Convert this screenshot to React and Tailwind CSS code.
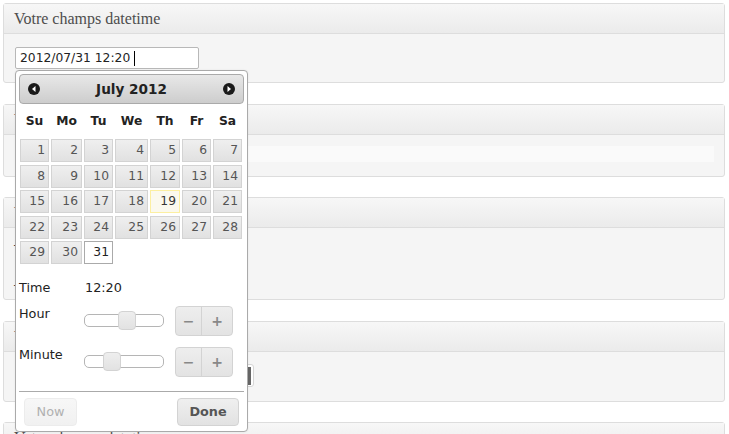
import React from "react";

function Panel({ title, className, bodyClass, children }) {
  return (
    <div className={`rounded-[3px] border border-[#dddddd] bg-[#f5f5f5] ${className}`}>
      <div className="flex h-[30px] items-center border-b border-[#dddddd] bg-linear-to-b from-[#f7f7f7] to-[#ebebeb] pl-[10px] font-['Liberation_Serif',serif] text-[16px] text-[#4d4d4d]">
        {title}
      </div>
      <div className={bodyClass}>{children}</div>
    </div>
  );
}

function CircleArrow({ dir }) {
  return (
    <svg width="12" height="12" viewBox="0 0 12 12">
      <circle cx="6" cy="6" r="6" fill="#1a1a1a" />
      {dir === "w" ? (
        <polygon points="7.5,3 4,6 7.5,9" fill="#ffffff" />
      ) : (
        <polygon points="4.5,3 8,6 4.5,9" fill="#ffffff" />
      )}
    </svg>
  );
}

function Slider({ left }) {
  return (
    <div className="relative mt-[8px] h-[13px] w-[80px] rounded-[5px] border border-[#b5b5b5] bg-white">
      <div
        className="absolute top-[-4px] h-[19px] w-[18px] rounded-[4px] border border-[#d3d3d3] bg-linear-to-b from-[#eeeeee] to-[#e2e2e2]"
        style={{ left: left }}
      />
    </div>
  );
}

function Stepper() {
  return (
    <div className="ml-[11px] flex h-[30px] w-[58px] rounded-[4px] border border-[#d3d3d3] bg-linear-to-b from-[#eeeeee] to-[#e3e3e3] text-[#888888]">
      <div className="flex w-[26px] items-center justify-center border-r border-[#d3d3d3] text-[14px] font-bold">−</div>
      <div className="flex flex-1 items-center justify-center text-[14px] font-bold">+</div>
    </div>
  );
}

export default function App() {
  const days = Array.from({ length: 31 }, (_, i) => i + 1);
  const names = ["Su", "Mo", "Tu", "We", "Th", "Fr", "Sa"];
  const cellBase =
    "flex items-center justify-end border pr-[3px]";
  return (
    <div className="relative h-[434px] w-[729px] overflow-hidden bg-white pl-[3px] pr-[4px] pt-[3px] font-['DejaVu_Sans',sans-serif]">
      <Panel title="Votre champs datetime" className="" bodyClass="h-[48px] pl-[11px] pt-[13px]">
        <div className="flex h-[22px] w-[184px] items-center rounded-[2px] border border-[#b8b8b8] bg-white pl-[4px] text-[12.3px] text-[#222]">
          <span className="whitespace-pre">2012/07/31 12:20 </span>
          <span className="inline-block h-[15px] w-px bg-black" />
        </div>
      </Panel>

      <Panel title="Votre champs date" className="mt-[21px]" bodyClass="h-[41px] pl-[11px] pr-[10px] pt-[11px]">
        <div className="h-[16px] bg-[#fafafa]" />
      </Panel>

      <Panel title="Votre champs time" className="mt-[20px]" bodyClass="h-[71px] pl-[10px] pt-[12px] text-[13px] text-[#444]">
        <div>Texte</div>
        <div className="mt-[20px]">Texte</div>
      </Panel>

      <Panel title="Votre champs select" className="mt-[21px]" bodyClass="h-[49px] pl-[12px] pt-[12px]">
        <div className="flex h-[23px] w-[238px] items-center justify-end rounded-[3px] border border-[#d6d6d6] bg-white pr-[2px]">
          <div className="h-[18px] w-[5px] border-l border-[#999] bg-[#666]" />
        </div>
      </Panel>

      <Panel title="Votre champs datetime" className="mt-[20px]" bodyClass="h-[40px]" />

      {/* Datepicker popup */}
      <div className="absolute left-[15px] top-[70px] h-[362px] w-[233px] rounded-[4px] border border-[#aaaaaa] bg-white p-[3px] shadow-[0_0_2px_rgba(0,0,0,0.08)]">
        <div className="flex h-[30px] items-center justify-between rounded-[4px] border border-[#aaaaaa] bg-linear-to-b from-[#e8e8e8] to-[#cdcdcd] px-[8px]">
          <CircleArrow dir="w" />
          <div className="text-[13.6px] font-bold text-[#222]">July 2012</div>
          <CircleArrow dir="e" />
        </div>

        <div className="ml-[1px] grid h-[35px] grid-cols-[29px_31px_29px_33px_30px_29px_29px] items-center gap-x-[2px] pb-[1px] text-[12.3px] font-bold text-[#222]">
          {names.map((n) => (
            <div key={n} className="text-center">{n}</div>
          ))}
        </div>

        <div className="ml-[1px] grid auto-rows-[23px] grid-cols-[29px_31px_29px_33px_30px_29px_29px] gap-x-[2px] gap-y-[2.5px] text-[12.3px]">
          {days.map((d) => {
            let cls =
              "border-[#d3d3d3] bg-linear-to-b from-[#efefef] via-[#e8e8e8] to-[#e1e1e1] text-[#555]";
            if (d === 19) cls = "border-[#fcefa1] bg-[#fbf9ee] text-[#363636]";
            if (d === 31) cls = "border-[#aaaaaa] bg-white text-[#212121]";
            return (
              <div key={d} className={`${cellBase} ${cls}`}>
                {d}
              </div>
            );
          })}
        </div>

        <div className="mt-[16px] flex h-[16px] items-center text-[12.8px] text-[#222]">
          <div className="w-[66px]">Time</div>
          <div>12:20</div>
        </div>

        <div className="mt-[10px] flex items-start text-[12.8px] text-[#222]">
          <div className="flex h-[16px] w-[65px] items-center">Hour</div>
          <Slider left="33px" />
          <Stepper />
        </div>

        <div className="mt-[11px] flex items-start text-[12.8px] text-[#222]">
          <div className="flex h-[16px] w-[65px] items-center">Minute</div>
          <Slider left="18px" />
          <Stepper />
        </div>

        <div className="mt-[14px] h-px bg-[#aaaaaa]" />

        <div className="mt-[6px] flex justify-between px-[5px] text-[12.8px]">
          <div className="flex h-[28px] w-[53px] items-center justify-center rounded-[4px] border border-[#ececec] bg-linear-to-b from-[#f7f7f7] to-[#f1f1f1] text-[#b0b0b0]">
            Now
          </div>
          <div className="flex h-[28px] w-[62px] items-center justify-center rounded-[4px] border border-[#d3d3d3] bg-linear-to-b from-[#efefef] to-[#e2e2e2] font-bold text-[#555]">
            Done
          </div>
        </div>
      </div>
    </div>
  );
}
